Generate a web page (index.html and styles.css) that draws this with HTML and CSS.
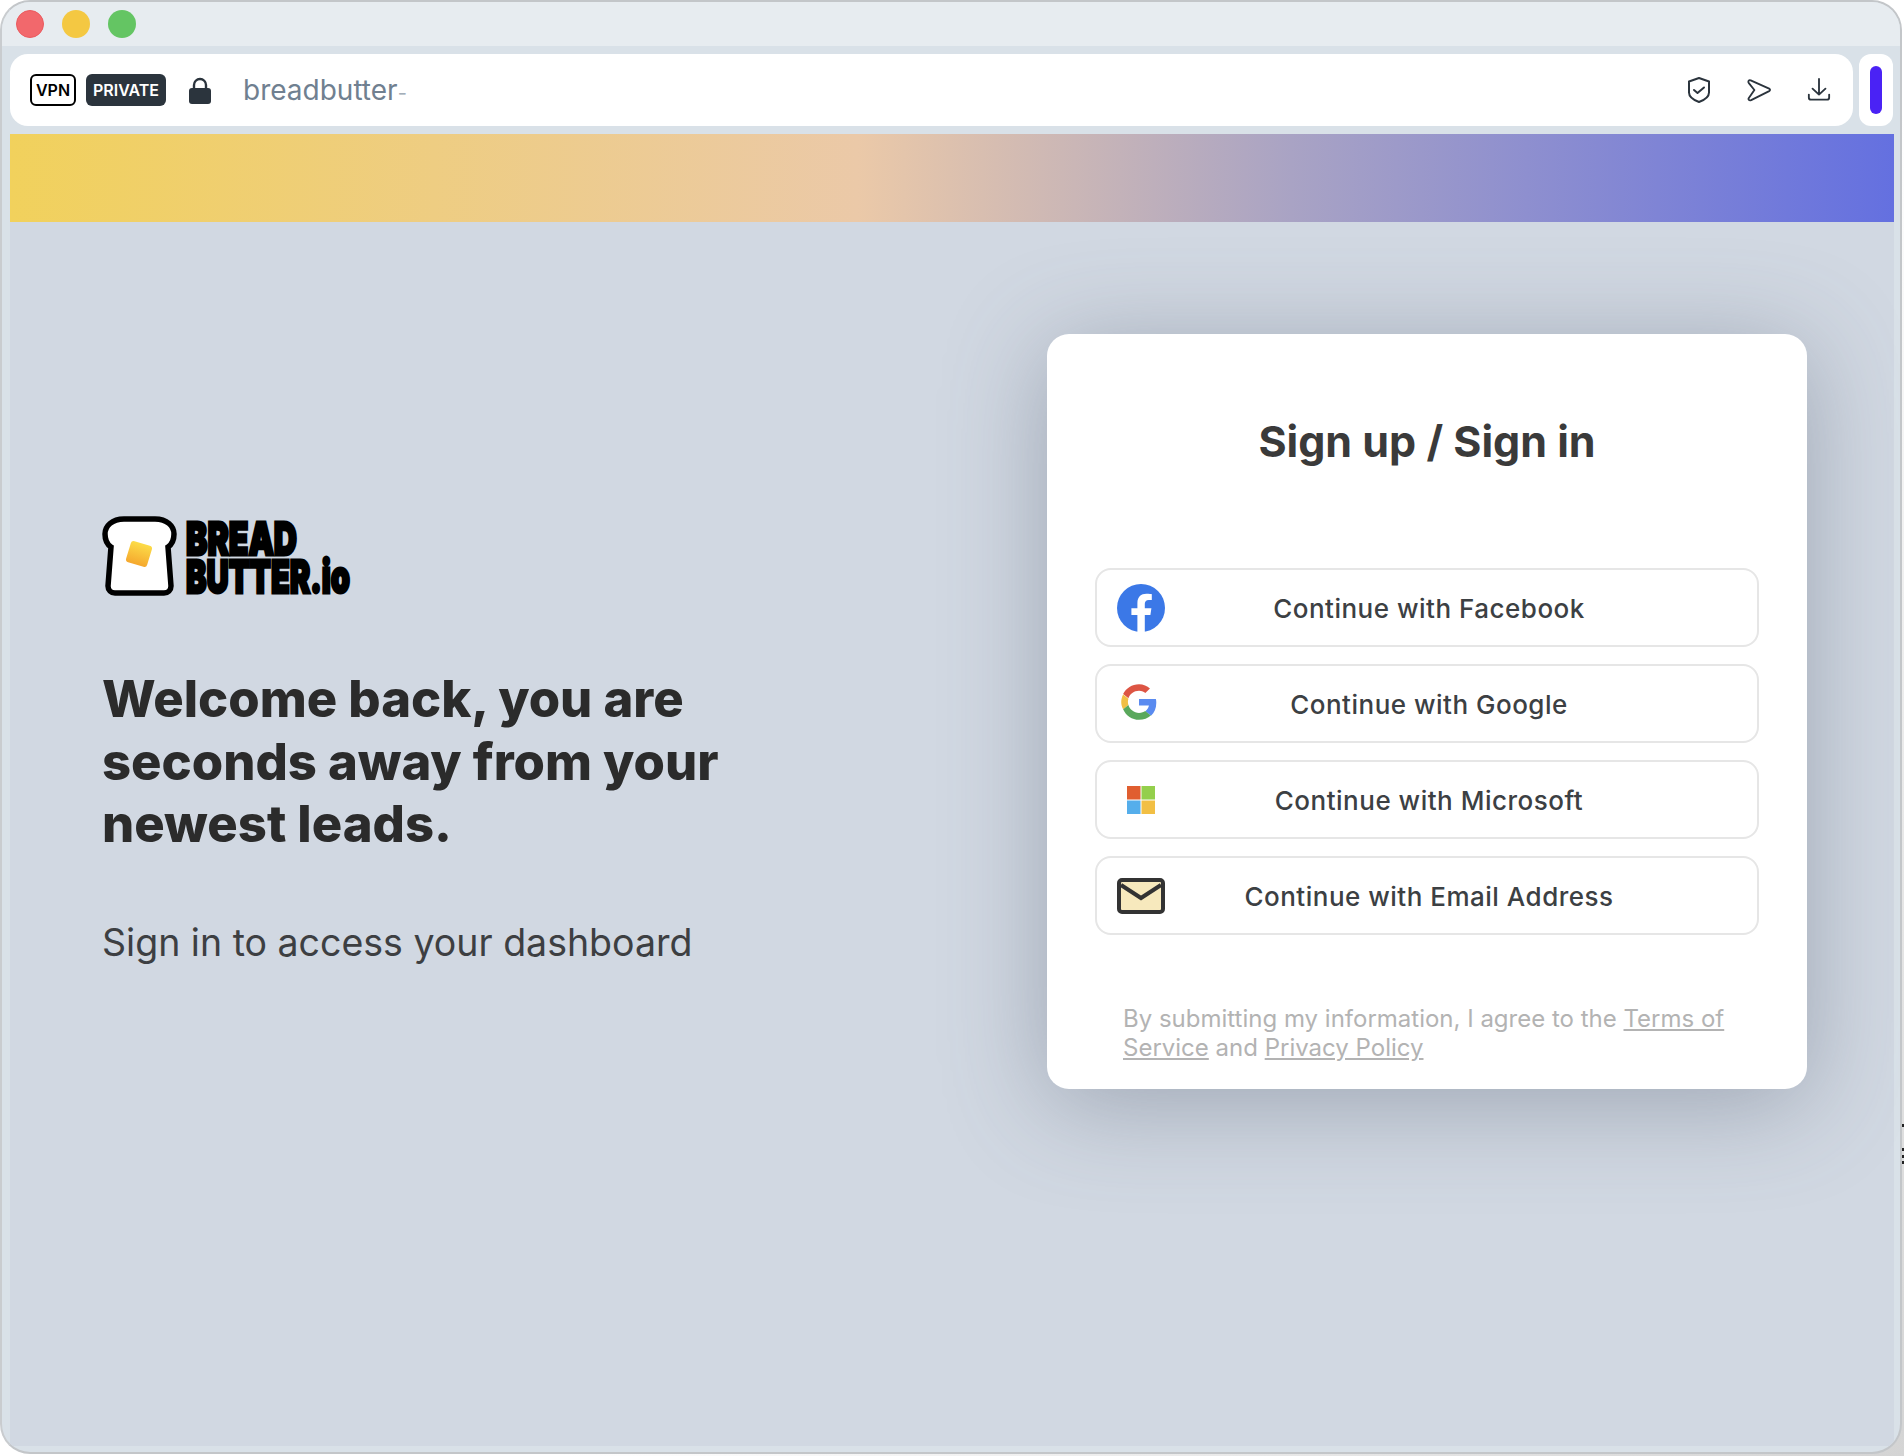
FILE: index.html
```html
<!DOCTYPE html>
<html lang="en">
<head>
    <meta charset="UTF-8" />
    <title>Bread &amp; Butter - Sign in</title>
    <link rel="stylesheet" href="styles.css">
</head>
<body>
    <div class="window">
        <div class="titlebar">
            <span class="light red"></span>
            <span class="light yellow"></span>
            <span class="light green"></span>
        </div>

        <div class="toolbar">
            <div class="address">
                <span class="badge vpn">VPN</span>
                <span class="badge private">PRIVATE</span>
                <svg class="lock" viewBox="0 0 22 27">
                    <path d="M5 12V8a6 6 0 0 1 12 0v4" fill="none" stroke="#2b343d" stroke-width="2.400"/>
                    <rect x="0" y="11" width="22" height="16" rx="3" fill="#2b343d"/>
                </svg>
                <span class="url">breadbutter<span class="url-fade">-</span></span>
                <div class="tools">
                    <svg class="tool" viewBox="0 0 24 26">
                        <path d="M12 1 22 4.500v11c0 4-4.500 7.500-10 9.500C6.500 23 2 19.500 2 15.500v-11z"/>
                        <path d="m7 13 3.500 3 6.500-5.500"/>
                    </svg>
                    <svg class="tool" viewBox="0 0 26 26">
                        <path d="M4 2.500 24 11.500c1.300.7 1.300 2 0 2.700L4.500 24c-2.200.8-3.500-.7-2.500-2.300L8 13 2 5.500C.8 3.500 2 1.800 4 2.500z"/>
                    </svg>
                    <svg class="tool" viewBox="0 0 26 26">
                        <path d="M13 1v17M6 11.500l7 6.500 7-6.500"/>
                        <path d="M2 18v3c0 1.500 1 2.500 2.500 2.500h17c1.500 0 2.500-1 2.500-2.500v-3"/>
                    </svg>
                </div>
            </div>
            <div class="menu"><span class="menu-pill"></span></div>
        </div>

        <div class="content">
            <div class="gradient"></div>
            <main class="page">
                <section class="intro">
                    <svg class="logo" viewBox="0 0 250 80">
                        <path class="toast" d="M22 3H53C65 3 72 10 72 18C72 25 69 29 66 31L69 70C69 74 66 77 62 77H13C9 77 6 74 6 70L9 31C6 29 3 25 3 18C3 10 10 3 22 3Z"/>
                        <defs>
                            <linearGradient id="butter" x1="0" y1="0" x2="0" y2="1">
                                <stop offset="0" stop-color="#fcdc48"/>
                                <stop offset="1" stop-color="#f5a82e"/>
                            </linearGradient>
                        </defs>
                        <rect x="26" y="27" width="22" height="22" rx="3" fill="url(#butter)" transform="rotate(17 37 38)"/>
                        <text class="logo-text" x="84" y="39" textLength="111" lengthAdjust="spacingAndGlyphs">BREAD</text>
                        <text class="logo-text" x="84" y="77" textLength="164" lengthAdjust="spacingAndGlyphs">BUTTER.io</text>
                    </svg>
                    <h1>Welcome back, you are seconds away from your newest leads.</h1>
                    <p>Sign in to access your dashboard</p>
                </section>

                <section class="card">
                    <h2>Sign up / Sign in</h2>
                    <div class="providers">
                        <a class="provider" href="#">
                            <svg class="icon" viewBox="0 0 24 24">
                                <circle cx="12" cy="12" r="12" fill="#3b78e7"/>
                                <path fill="#fff" d="M16.700 15.500l.5-3.400h-3.300V9.900c0-.9.500-1.900 2-1.900h1.500V5.100s-1.400-.2-2.700-.2c-2.700 0-4.500 1.600-4.500 4.600v2.600h-3v3.400h3V24h3.700v-8.500z"/>
                            </svg>
                            <span>Continue with Facebook</span>
                        </a>
                        <a class="provider" href="#">
                            <svg class="icon icon-small" viewBox="1 1 46 46">
                                <path fill="#dd5544" d="M24 9.500c3.900 0 6.600 1.700 8.100 3.100l5.900-5.800C34.400 3.500 29.600 1.300 24 1.300 15.100 1.300 7.400 6.400 3.700 13.800l6.800 5.300C12.200 13.700 17.600 9.500 24 9.500z"/>
                                <path fill="#5a8bf0" d="M46.100 24.800c0-1.900-.2-3.300-.5-4.700H24v8.500h12.700c-.3 2.100-1.600 5.200-4.600 7.300l7.200 5.600c4.300-3.900 6.800-9.800 6.800-16.700z"/>
                                <path fill="#f2bf44" d="M10.500 27.900c-.4-1.300-.7-2.600-.7-4s.3-2.800.7-4.100l-6.800-5.300C2.200 17.500 1.300 20.700 1.300 24s.9 6.500 2.400 9.400z"/>
                                <path fill="#5aa85c" d="M24 46.700c6.100 0 11.300-2 15.100-5.500l-7.200-5.600c-1.900 1.400-4.500 2.300-7.900 2.300-6.400 0-11.800-4.200-13.500-10l-6.800 5.300C7.400 41.600 15.100 46.700 24 46.700z"/>
                            </svg>
                            <span>Continue with Google</span>
                        </a>
                        <a class="provider" href="#">
                            <svg class="icon" viewBox="0 0 48 48">
                                <rect x="10" y="10" width="13.500" height="13.500" fill="#e05e30"/>
                                <rect x="24.500" y="10" width="13.500" height="13.500" fill="#94cf4c"/>
                                <rect x="10" y="24.500" width="13.500" height="13.500" fill="#55aeeb"/>
                                <rect x="24.500" y="24.500" width="13.500" height="13.500" fill="#f2bf44"/>
                            </svg>
                            <span>Continue with Microsoft</span>
                        </a>
                        <a class="provider" href="#">
                            <svg class="icon" viewBox="0 0 48 48">
                                <rect x="2" y="8" width="44" height="32" rx="3" fill="#f7e9bd" stroke="#333" stroke-width="4"/>
                                <path d="M4 13 24 26 44 13" fill="none" stroke="#333" stroke-width="4"/>
                            </svg>
                            <span>Continue with Email Address</span>
                        </a>
                    </div>
                    <p class="legal">By submitting my information, I agree to the <a href="#">Terms of</a> <a href="#">Service</a> and <a href="#">Privacy Policy</a></p>
                </section>
            </main>
        </div>
    </div>
    <div class="edge-marks"></div>
</body>
</html>
```

FILE: styles.css
```css
* {
    box-sizing: border-box;
}

body {
    position: relative;
    margin: 0;
    width: 1904px;
    height: 1456px;
    overflow: hidden;
    font-family: 'Inter', sans-serif;
    background: linear-gradient(135deg, #ffffff 60%, #d4d4d4);
}

.window {
    display: flex;
    flex-direction: column;
    width: 1902px;
    height: 1454px;
    background-color: #d9e1e8;
    border: 2px solid #c3c6c9;
    border-left-color: #c9cccf;
    border-radius: 30px;
    overflow: hidden;
}

.edge-marks {
    position: absolute;
    top: 1124px;
    right: 0;
    width: 2px;
    height: 3px;
    background-color: #222;
    box-shadow: 0 24px #222, 0 31px #222, 0 37px #222;
}

.titlebar {
    display: flex;
    gap: 18px;
    align-items: center;
    height: 44px;
    padding-left: 14px;
    background-color: #e7ecf0;
}

.light {
    width: 28px;
    height: 28px;
    border-radius: 50%;
}

.red {
    background-color: #f2686c;
    border: 1px solid #ea5a5e;
}

.yellow {
    background-color: #f4c842;
}

.green {
    background-color: #64c563;
}

.toolbar {
    display: flex;
    gap: 6px;
    padding: 8px 7px 8px 8px;
}

.address {
    display: flex;
    align-items: center;
    flex: 1;
    height: 72px;
    padding: 0 22px 0 20px;
    background-color: #fff;
    border-radius: 18px;
}

.badge {
    display: flex;
    align-items: center;
    justify-content: center;
    height: 32px;
    border-radius: 6px;
    font-size: 16px;
    font-weight: 600;
}

.vpn {
    width: 46px;
    color: #000;
    border: 2px solid #000;
}

.private {
    width: 80px;
    margin-left: 10px;
    color: #fff;
    background-color: #2b343d;
}

.lock {
    width: 22px;
    height: 27px;
    margin-left: 23px;
}

.url {
    margin-left: 32px;
    font-size: 28px;
    color: #708090;
}

.url-fade {
    font-size: 20px;
    color: #a3aeb9;
}

.tools {
    display: flex;
    align-items: center;
    gap: 36px;
    margin-left: auto;
}

.tool {
    width: 24px;
    height: 26px;
    fill: none;
    stroke: #2b343d;
    stroke-width: 2;
    stroke-linecap: round;
    stroke-linejoin: round;
}

.menu {
    display: flex;
    align-items: center;
    justify-content: center;
    width: 34px;
    height: 72px;
    background-color: #fff;
    border-radius: 12px;
}

.menu-pill {
    width: 12px;
    height: 48px;
    background-color: #4a22f5;
    border-radius: 6px;
}

.content {
    flex: 1;
    display: flex;
    flex-direction: column;
    padding: 0 6px 6px 8px;
}

.gradient {
    height: 88px;
    background: linear-gradient(90deg, #f1d15c 0%, #ebc9a8 45%, #a9a3c4 68%, #6470e0 100%);
}

.page {
    flex: 1;
    display: flex;
    justify-content: space-between;
    padding: 112px 87px 0 92px;
    background-color: #d1d8e2;
}

.intro {
    width: 660px;
    padding-top: 182px;
}

.logo {
    display: block;
    width: 250px;
    height: 80px;
    overflow: visible;
}

.toast {
    fill: #fff;
    stroke: #000;
    stroke-width: 5.500;
}

.logo-text {
    font-family: 'Inter', sans-serif;
    font-size: 46px;
    font-weight: 900;
    fill: #000;
    stroke: #000;
    stroke-width: 3;
}

.intro h1 {
    margin: 72px 0 0;
    font-size: 50.750px;
    line-height: 62.500px;
    font-weight: 800;
    color: #2b2b2b;
}

.intro p {
    margin: 64px 0 0;
    font-size: 37.500px;
    color: #3d3f42;
}

.card {
    display: flex;
    flex-direction: column;
    width: 760px;
    height: 755px;
    padding: 0 48px;
    background-color: #fff;
    border-radius: 22px;
    box-shadow: 0 14px 100px rgba(85, 95, 115, 0.42);
}

.card h2 {
    margin: 80px 0 0;
    font-size: 43px;
    line-height: 54px;
    font-weight: 700;
    text-align: center;
    color: #3a3a3a;
}

.providers {
    display: flex;
    flex-direction: column;
    gap: 17px;
    margin-top: 100px;
}

.provider {
    display: grid;
    grid-template-columns: 48px 1fr 48px;
    align-items: center;
    height: 79px;
    padding: 0 20px;
    border: 2px solid #e6e6e6;
    border-radius: 16px;
    color: #3c4043;
    text-decoration: none;
    font-size: 26px;
    font-weight: 500;
    letter-spacing: 0.5px;
    text-align: center;
}

.provider span {
    padding: 2px 0 0 4px;
}

.icon {
    display: block;
    width: 48px;
    height: 48px;
}

.icon-small {
    width: 36px;
    height: 36px;
    margin: -3px 0 0 4px;
}

.legal {
    margin: 69px 0 0;
    padding: 0 28px;
    font-size: 24px;
    line-height: 29px;
    color: #b3b3b3;
}

.legal a {
    color: #b3b3b3;
}
```
